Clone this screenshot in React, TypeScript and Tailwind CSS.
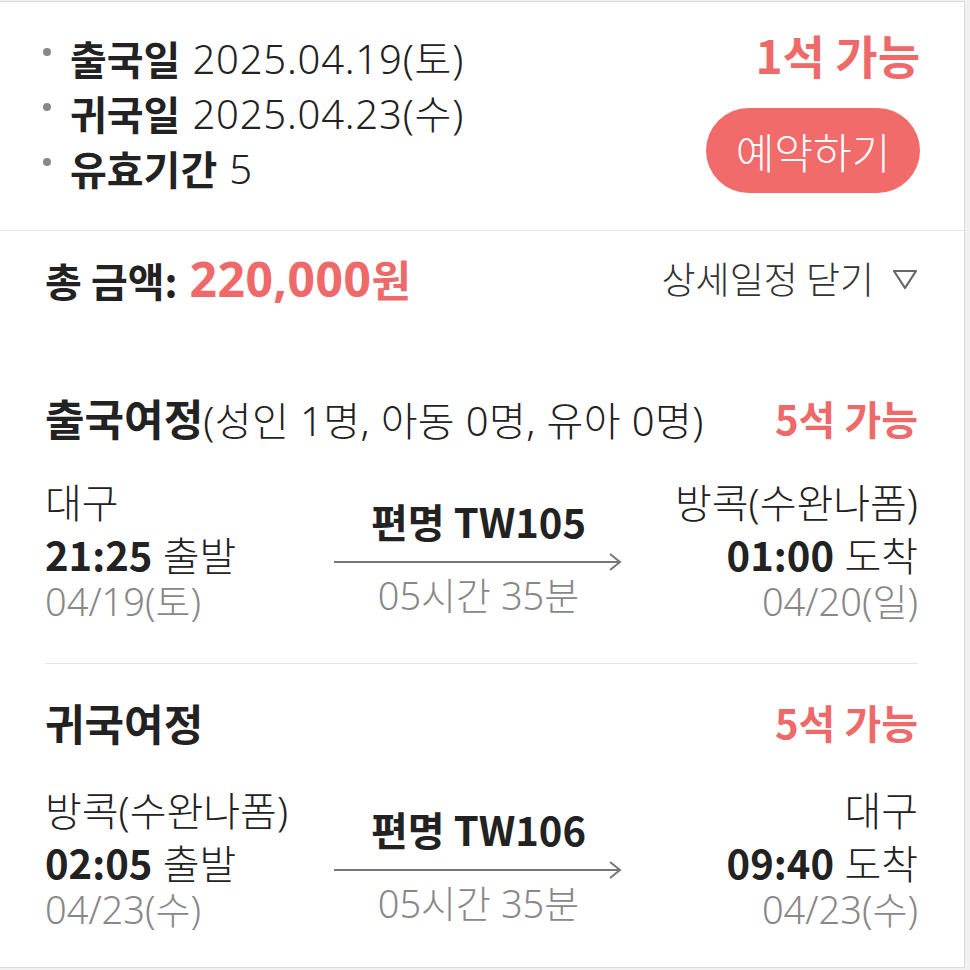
const font = { fontFamily: '"Noto Sans", "Noto Sans CJK KR", sans-serif' }
const cjk = { fontFamily: '"Noto Sans CJK KR", "Noto Sans", sans-serif' }

interface Leg {
  from: string
  fromTime: string
  fromDate: string
  to: string
  toTime: string
  toDate: string
  flight: string
  duration: string
}

const Arrow = () => (
  <svg width="290" height="20" viewBox="0 0 290 20" className="block mt-[7px]">
    <line x1="0" y1="10" x2="286" y2="10" stroke="#777" strokeWidth="2" />
    <path d="M276 2 L286 10 L276 18" fill="none" stroke="#777" strokeWidth="2" />
  </svg>
)

const FlightRow = ({ leg }: { leg: Leg }) => (
  <div className="flex justify-between items-start">
    <div className="flex flex-col w-[300px] font-light">
      <span className="text-[40px] leading-[52px] text-[#222]">{leg.from}</span>
      <span className="text-[40px] leading-[50px] text-[#222]">
        <b className="inline-block leading-[50px] font-bold" style={cjk}>{leg.fromTime}</b> 출발
      </span>
      <span className="text-[38px] leading-[40px] text-[#888]">{leg.fromDate}</span>
    </div>
    <div className="flex flex-col items-center pt-[20px] -ml-[6px]">
      <span className="text-[40px] leading-[48px] font-bold text-[#222]" style={cjk}>{leg.flight}</span>
      <Arrow />
      <span className="mt-[2px] text-[38px] leading-[42px] font-light text-[#888]">{leg.duration}</span>
    </div>
    <div className="flex flex-col items-end w-[300px] font-light">
      <span className="text-[40px] leading-[52px] text-[#222]">{leg.to}</span>
      <span className="text-[40px] leading-[50px] text-[#222]">
        <b className="inline-block leading-[50px] font-bold" style={cjk}>{leg.toTime}</b> 도착
      </span>
      <span className="text-[38px] leading-[40px] text-[#888]">{leg.toDate}</span>
    </div>
  </div>
)

const legs: Leg[] = [
  { from: '대구', fromTime: '21:25', fromDate: '04/19(토)', to: '방콕(수완나폼)', toTime: '01:00', toDate: '04/20(일)', flight: '편명 TW105', duration: '05시간 35분' },
  { from: '방콕(수완나폼)', fromTime: '02:05', fromDate: '04/23(수)', to: '대구', toTime: '09:40', toDate: '04/23(수)', flight: '편명 TW106', duration: '05시간 35분' },
]

const App = () => {
  return (
    <div className="w-[970px] h-[970px] bg-[#f1f1f1] pt-[1px]" style={font}>
      <div className="w-[965px] h-[967px] bg-white border border-l-0 border-[#dcdcdc]">
        {/* top */}
        <div className="h-[229px] border-b border-[#e6e6e6] flex justify-between pl-[43px] pr-[44px] pt-[29px]">
          <ul className="flex flex-col">
            {[
              ['출국일', '2025.04.19(토)'],
              ['귀국일', '2025.04.23(수)'],
              ['유효기간', '5'],
            ].map(([k, v]) => (
              <li key={k} className="flex items-center text-[40px] leading-[55px] text-[#222]">
                <span className="w-[8px] h-[8px] rounded-full bg-[#888] mr-[19px] -mt-[14px]" />
                <b className="font-bold" style={cjk}>{k}</b>
                <span className="ml-[12px] font-light tracking-[0.8px]">{v}</span>
              </li>
            ))}
          </ul>
          <div className="flex flex-col items-end -mt-[5px]" style={cjk}>
            <span className="text-[46px] leading-[56px] font-bold text-[#ee6a6a]">1석 가능</span>
            <button className="mt-[26px] w-[214px] h-[85px] rounded-full bg-[#f26b6b] text-white text-[42px] font-light">예약하기</button>
          </div>
        </div>
        {/* body */}
        <div className="pl-[45px] pr-[46px]">
          <div className="flex justify-between items-center h-[100px] pb-[5px]">
            <div className="flex items-baseline font-bold">
              <span className="text-[40px] text-[#222]" style={cjk}>총 금액:</span>
              <span className="ml-[12px] text-[48px] text-[#ee6a6a] tracking-[0.5px]">220,000</span>
              <span className="text-[43px] text-[#ee6a6a]" style={cjk}>원</span>
            </div>
            <div className="flex items-center text-[37px] font-light text-[#333]" style={cjk}>
              상세일정 닫기
              <svg width="26" height="22" viewBox="0 0 26 22" className="ml-[18px]">
                <path d="M2 3 L24 3 L13 20 Z" fill="none" stroke="#666" strokeWidth="2.2" strokeLinejoin="round" />
              </svg>
            </div>
          </div>

          <div className="flex justify-between items-center mt-[59px] h-[56px]">
            <div className="flex items-baseline text-[#222]">
              <span className="text-[43px] font-bold" style={cjk}>출국여정</span>
              <span className="text-[40px] font-light tracking-[0.4px]">(성인 1명, 아동 0명, 유아 0명)</span>
            </div>
            <span className="text-[40px] font-bold text-[#ee6a6a]" style={cjk}>5석 가능</span>
          </div>
          <div className="mt-[31px] pb-[42px] border-b border-[#e6e6e6]">
            <FlightRow leg={legs[0]} />
          </div>

          <div className="flex justify-between items-center mt-[30px] h-[56px]">
            <span className="text-[43px] font-bold text-[#222]" style={cjk}>귀국여정</span>
            <span className="text-[40px] font-bold text-[#ee6a6a]" style={cjk}>5석 가능</span>
          </div>
          <div className="mt-[35px]">
            <FlightRow leg={legs[1]} />
          </div>
        </div>
      </div>
    </div>
  )
}

export default App
